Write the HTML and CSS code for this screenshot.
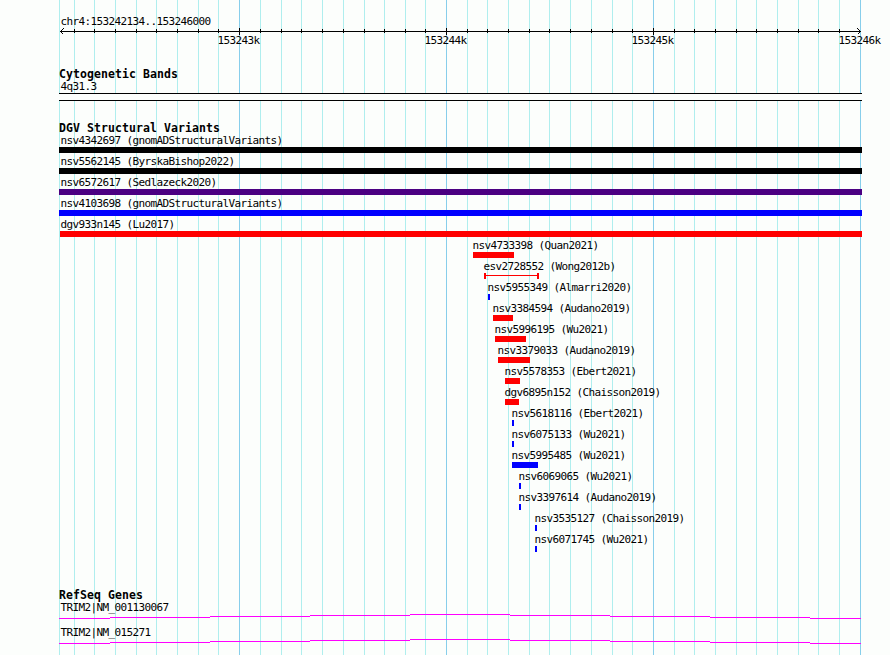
FILE: index.html
```html
<!DOCTYPE html>
<html lang="en">
<head>
<meta charset="utf-8">
<title>chr4:153242134..153246000</title>
<link rel="stylesheet" href="styles.css">
</head>
<body>
<main class="browser">
<svg class="grid" width="890" height="655" shape-rendering="crispEdges" aria-hidden="true">
<path class="minor" d="M59.5 0v655M74.5 0v655M94.5 0v655M115.5 0v655M136.5 0v655M156.5 0v655M177.5 0v655M198.5 0v655M218.5 0v655M260.5 0v655M281.5 0v655M301.5 0v655M322.5 0v655M343.5 0v655M364.5 0v655M384.5 0v655M405.5 0v655M425.5 0v655M467.5 0v655M487.5 0v655M508.5 0v655M529.5 0v655M549.5 0v655M570.5 0v655M591.5 0v655M612.5 0v655M632.5 0v655M674.5 0v655M694.5 0v655M715.5 0v655M736.5 0v655M756.5 0v655M777.5 0v655M798.5 0v655M818.5 0v655M839.5 0v655"/>
<path class="major" d="M239.5 0v655M446.5 0v655M653.5 0v655M860.5 0v655"/>
</svg>
<header class="scale">
<div class="label">chr4:153242134..153246000</div>
<svg class="axis" width="803" height="7" shape-rendering="crispEdges" aria-hidden="true">
<path d="M1 3.5H802M15.5 1v4M35.5 1v4M56.5 1v4M77.5 1v4M97.5 1v4M118.5 1v4M139.5 1v4M159.5 1v4M180.5 0v7M201.5 1v4M222.5 1v4M242.5 1v4M263.5 1v4M284.5 1v4M305.5 1v4M325.5 1v4M346.5 1v4M366.5 1v4M387.5 0v7M408.5 1v4M428.5 1v4M449.5 1v4M470.5 1v4M490.5 1v4M511.5 1v4M532.5 1v4M553.5 1v4M573.5 1v4M594.5 0v7M615.5 1v4M635.5 1v4M656.5 1v4M677.5 1v4M697.5 1v4M718.5 1v4M739.5 1v4M759.5 1v4M780.5 1v4"/>
<path d="M4.5 0.5L1.5 3.5L4.5 6.5M798.5 0.5L801.5 3.5L798.5 6.5"/>
</svg>
<div class="ticks"><span>153243k</span><span>153244k</span><span>153245k</span><span>153246k</span></div>
</header>
<section class="track cyto">
<h2>Cytogenetic Bands</h2>
<div class="label">4q31.3</div>
<div class="band"></div>
</section>
<section class="track variants">
<h2>DGV Structural Variants</h2>
<div class="feature"><div class="label">nsv4342697 (gnomADStructuralVariants)</div><div class="bar black full"></div></div>
<div class="feature"><div class="label">nsv5562145 (ByrskaBishop2022)</div><div class="bar black full"></div></div>
<div class="feature"><div class="label">nsv6572617 (Sedlazeck2020)</div><div class="bar indigo full"></div></div>
<div class="feature"><div class="label">nsv4103698 (gnomADStructuralVariants)</div><div class="bar blue full"></div></div>
<div class="feature" style="--start:1px"><div class="label first">dgv933n145 (Lu2017)</div><div class="bar red full"></div></div>
<div class="feature" style="--start:414px;--size:41px"><div class="label flush">nsv4733398 (Quan2021)</div><div class="bar red"></div></div>
<div class="feature" style="--start:425px;--size:55px"><div class="label flush">esv2728552 (Wong2012b)</div><div class="bar span"></div></div>
<div class="feature" style="--start:429px;--size:2px"><div class="label flush">nsv5955349 (Almarri2020)</div><div class="bar blue"></div></div>
<div class="feature" style="--start:434px;--size:20px"><div class="label flush">nsv3384594 (Audano2019)</div><div class="bar red"></div></div>
<div class="feature" style="--start:436px;--size:31px"><div class="label flush">nsv5996195 (Wu2021)</div><div class="bar red"></div></div>
<div class="feature" style="--start:439px;--size:32px"><div class="label flush">nsv3379033 (Audano2019)</div><div class="bar red"></div></div>
<div class="feature" style="--start:446px;--size:15px"><div class="label flush">nsv5578353 (Ebert2021)</div><div class="bar red"></div></div>
<div class="feature" style="--start:446px;--size:14px"><div class="label flush">dgv6895n152 (Chaisson2019)</div><div class="bar red"></div></div>
<div class="feature" style="--start:453px;--size:2px"><div class="label flush">nsv5618116 (Ebert2021)</div><div class="bar blue"></div></div>
<div class="feature" style="--start:453px;--size:2px"><div class="label flush">nsv6075133 (Wu2021)</div><div class="bar blue"></div></div>
<div class="feature" style="--start:453px;--size:26px"><div class="label flush">nsv5995485 (Wu2021)</div><div class="bar blue"></div></div>
<div class="feature" style="--start:460px;--size:2px"><div class="label flush">nsv6069065 (Wu2021)</div><div class="bar blue"></div></div>
<div class="feature" style="--start:460px;--size:2px"><div class="label flush">nsv3397614 (Audano2019)</div><div class="bar blue"></div></div>
<div class="feature" style="--start:476px;--size:2px"><div class="label flush">nsv3535127 (Chaisson2019)</div><div class="bar blue"></div></div>
<div class="feature" style="--start:476px;--size:2px"><div class="label flush">nsv6071745 (Wu2021)</div><div class="bar blue"></div></div>
</section>
<section class="track genes">
<h2>RefSeq Genes</h2>
<div class="gene"><div class="label">TRIM2|NM_001130067</div>
<svg class="intron" width="802" height="5" shape-rendering="crispEdges"><path d="M0 4.5H51M51 3.5H151M151 2.5H251M251 1.5H351M351 .5H451M451 1.5H551M551 2.5H651M651 3.5H751M751 4.5H802"/></svg></div>
<div class="gene"><div class="label">TRIM2|NM_015271</div>
<svg class="intron" width="802" height="5" shape-rendering="crispEdges"><path d="M0 4.5H51M51 3.5H151M151 2.5H251M251 1.5H351M351 .5H451M451 1.5H551M551 2.5H651M651 3.5H751M751 4.5H802"/></svg></div>
</section>
</main>
</body>
</html>
```
FILE: styles.css
```css
* { box-sizing: border-box; }
body { margin: 0; background: #fcfefc; color: #000; font: 11px/13px "DejaVu Sans Mono", "Liberation Mono", monospace; }
.browser { position: relative; width: 890px; height: 655px; overflow: hidden; padding: 15px 0 0 59px; }
.browser svg { display: block; fill: none; }
.browser .grid { position: absolute; left: 0; top: 0; z-index: -1; }
.minor { stroke: #afeeee; }
.major { stroke: #87ceeb; }
.label { height: 13px; padding-left: 1.4px; letter-spacing: -0.622px; white-space: pre; }
.scale { height: 52px; }
.browser .axis { stroke: #000; }
.ticks { display: flex; gap: 165px; height: 13px; margin: -1px 0 0 158.5px; letter-spacing: -0.622px; }
.ticks span { flex: 0 0 42px; }
h2 { height: 13px; margin: 0; font-size: 11.5px; line-height: 13px; font-weight: bold; letter-spacing: 0.077px; white-space: pre; }
.cyto { height: 54px; padding-top: 1px; }
.cyto .label { margin-top: -1px; }
.band { width: 803px; height: 8px; border: solid #000; border-width: 1px 0; background: #fcfefc; }
.variants { height: 468px; padding-top: 1px; }
.variants h2 { height: 12px; }
.feature { height: 21px; padding-left: var(--start, 0); }
.first { padding-left: 0.4px; }
.flush { padding-left: 0; margin-left: -0.6px; }
.bar { width: var(--size); height: 6px; }
.full { width: calc(803px - var(--start, 0px)); }
.black { background: #000; }
.indigo { background: #4b0082; }
.blue { background: #00f; }
.red { background: #f00; }
.span { border: solid #f00; border-width: 0 2px; background: linear-gradient(#f00, #f00) 0 2px / 100% 1px no-repeat; }
.genes h2 { height: 12px; }
.gene { height: 25px; }
.browser .intron { stroke: #f0f; }
```
